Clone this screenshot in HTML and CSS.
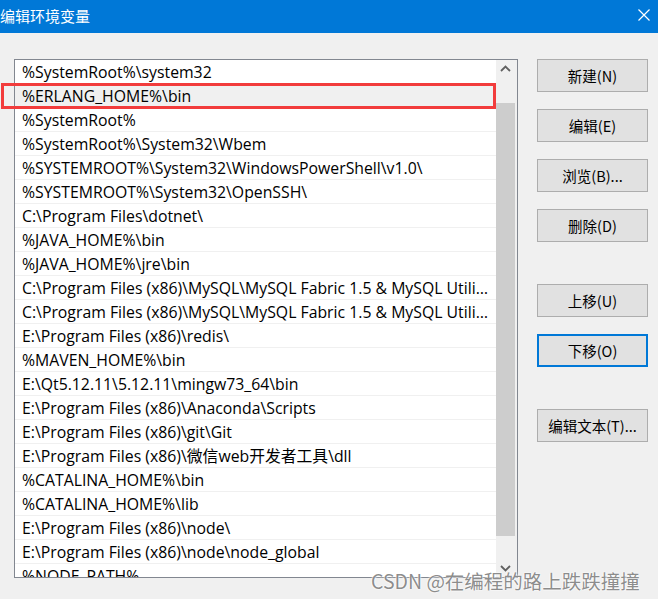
FILE: index.html
```html
<!DOCTYPE html>
<html lang="zh-CN">
<head>
	<meta charset="UTF-8">
	<title>编辑环境变量</title>
	<link rel="stylesheet" href="styles.css">
</head>
<body>
	<div class="titlebar">
		<span class="title">编辑环境变量</span>
		<svg class="close" width="12" height="12" viewBox="0 0 12 12">
			<path d="M0.5 0.5 L11.5 11.5 M11.5 0.5 L0.5 11.5" stroke="#fff" stroke-width="1.2" fill="none"/>
		</svg>
	</div>
	<div class="dialog">
		<div class="listbox">
			<div class="rows">
				<div class="row">%SystemRoot%\system32</div>
				<div class="row selected">%ERLANG_HOME%\bin</div>
				<div class="row">%SystemRoot%</div>
				<div class="row">%SystemRoot%\System32\Wbem</div>
				<div class="row">%SYSTEMROOT%\System32\WindowsPowerShell\v1.0\</div>
				<div class="row">%SYSTEMROOT%\System32\OpenSSH\</div>
				<div class="row">C:\Program Files\dotnet\</div>
				<div class="row">%JAVA_HOME%\bin</div>
				<div class="row">%JAVA_HOME%\jre\bin</div>
				<div class="row">C:\Program Files (x86)\MySQL\MySQL Fabric 1.5 &amp; MySQL Utilities 1.5\</div>
				<div class="row">C:\Program Files (x86)\MySQL\MySQL Fabric 1.5 &amp; MySQL Utilities 1.5\Doctrine extensions for PHP\</div>
				<div class="row">E:\Program Files (x86)\redis\</div>
				<div class="row">%MAVEN_HOME%\bin</div>
				<div class="row">E:\Qt5.12.11\5.12.11\mingw73_64\bin</div>
				<div class="row">E:\Program Files (x86)\Anaconda\Scripts</div>
				<div class="row">E:\Program Files (x86)\git\Git</div>
				<div class="row">E:\Program Files (x86)\微信web开发者工具\dll</div>
				<div class="row">%CATALINA_HOME%\bin</div>
				<div class="row">%CATALINA_HOME%\lib</div>
				<div class="row">E:\Program Files (x86)\node\</div>
				<div class="row">E:\Program Files (x86)\node\node_global</div>
				<div class="row">%NODE_PATH%</div>
			</div>
			<div class="scrollbar">
				<div class="arrow">
					<svg width="11" height="7" viewBox="0 0 11 7"><path d="M1 6 L5.5 1.5 L10 6" stroke="#606060" stroke-width="1.8" fill="none"/></svg>
				</div>
				<div class="track"><div class="thumb"></div></div>
				<div class="arrow">
					<svg width="11" height="7" viewBox="0 0 11 7"><path d="M1 1 L5.5 5.5 L10 1" stroke="#606060" stroke-width="1.8" fill="none"/></svg>
				</div>
			</div>
			<div class="mark"></div>
		</div>
		<div class="buttons">
			<div class="btn">新建(N)</div>
			<div class="btn">编辑(E)</div>
			<div class="btn">浏览(B)...</div>
			<div class="btn">删除(D)</div>
			<div class="btn far">上移(U)</div>
			<div class="btn focus">下移(O)</div>
			<div class="btn far">编辑文本(T)...</div>
		</div>
	</div>
	<div class="watermark">CSDN @在编程的路上跌跌撞撞</div>
</body>
</html>
```

FILE: styles.css
```css
html, body {
	margin: 0;
	padding: 0;
}
body {
	width: 658px;
	height: 599px;
	overflow: hidden;
	background: #f0f0f0;
	font-family: "Open Sans", "Noto Sans CJK SC", sans-serif;
	color: #000;
	position: relative;
}
.titlebar {
	height: 33px;
	background: #0078d7;
	display: flex;
	align-items: center;
	justify-content: space-between;
	padding-right: 8px;
}
.title {
	color: #fff;
	font-family: "Noto Sans CJK SC", sans-serif;
	font-size: 15px;
	margin-top: -3px;
}
.close {
	margin-top: -3px;
}
.dialog {
	display: flex;
	padding: 26px 0 0 14px;
}
.listbox {
	width: 502px;
	height: 517px;
	border: 1px solid #828790;
	background: #fff;
	display: flex;
	position: relative;
}
.rows {
	width: 481px;
	overflow: hidden;
}
.row {
	height: 24px;
	line-height: 23px;
	padding: 1px 6px 0 7px;
	border-bottom: 1px solid #f0f0f0;
	box-sizing: border-box;
	font-size: 15.8px;
	white-space: nowrap;
	overflow: hidden;
	text-overflow: ellipsis;
}
.row.selected {
	background: #f0f0f0;
}
.mark {
	position: absolute;
	left: -14px;
	top: 23px;
	width: 489px;
	height: 20px;
	border: 3px solid #f23c3c;
}
.scrollbar {
	width: 21px;
	background: #f0f0f0;
	display: flex;
	flex-direction: column;
}
.arrow {
	height: 17px;
	display: flex;
	align-items: center;
	justify-content: center;
	padding-right: 2px;
}
.track {
	flex: 1;
	padding-top: 26px;
	padding-bottom: 24px;
	display: flex;
}
.thumb {
	width: 19px;
	background: #cdcdcd;
}
.buttons {
	margin-left: 19px;
	display: flex;
	flex-direction: column;
	gap: 17px;
}
.btn {
	width: 111px;
	height: 33px;
	box-sizing: border-box;
	border: 1px solid #adadad;
	background: #e1e1e1;
	font-family: "Noto Sans CJK SC", sans-serif;
	font-size: 14.5px;
	display: flex;
	align-items: center;
	justify-content: center;
}
.btn.far {
	margin-top: 25px;
}
.btn.focus {
	border: 2px solid #0078d7;
}
.watermark {
	position: absolute;
	left: 371px;
	top: 566px;
	font-family: "Noto Sans CJK SC", sans-serif;
	font-size: 19.5px;
	color: rgba(120, 120, 120, 0.85);
	text-shadow: 0 0 2px #fff, 0 0 2px #fff;
	white-space: nowrap;
}
```
